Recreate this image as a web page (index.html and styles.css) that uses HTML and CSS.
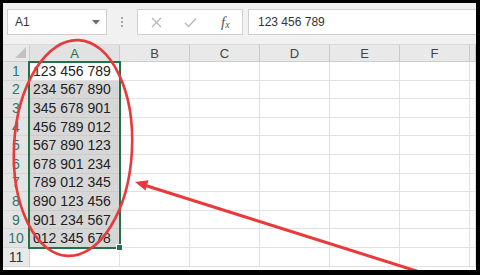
FILE: index.html
```html
<!DOCTYPE html>
<html lang="en">
<head>
    <meta charset="UTF-8">
    <title>Sheet selection</title>
    <link rel="stylesheet" href="styles.css">
</head>
<body>
    <div class="window">
        <div class="toolbar">
            <div class="name-box">
                <span>A1</span>
                <svg class="caret" width="8" height="5" viewBox="0 0 8 5"><path d="M0 0 L8 0 L4 4.5 Z" fill="#6a6a6a"/></svg>
            </div>
            <div class="grip"><i></i><i></i><i></i></div>
            <div class="fx-box">
                <svg class="ico" width="11" height="11" viewBox="0 0 11 11"><path d="M1 1 L10 10 M10 1 L1 10" stroke="#b5b5b5" stroke-width="1.2"/></svg>
                <svg class="ico" width="13" height="11" viewBox="0 0 13 11"><path d="M1 6 L4.5 9.5 L12 1.5" stroke="#b5b5b5" stroke-width="1.3" fill="none"/></svg>
                <span class="fx">f<sub>x</sub></span>
            </div>
            <div class="formula">123 456 789</div>
        </div>

        <div class="sheet">
            <div class="hd corner"><svg width="11" height="11" viewBox="0 0 11 11"><path d="M11 0 L11 11 L0 11 Z" fill="#c2c2c2"/></svg></div>
            <div class="hd col sel">A</div><div class="hd col">B</div><div class="hd col">C</div><div class="hd col">D</div><div class="hd col">E</div><div class="hd col">F</div><div class="hd col"></div>

            <div class="hd row sel">1</div><div class="c active">123 456 789</div><div class="c"></div><div class="c"></div><div class="c"></div><div class="c"></div><div class="c"></div><div class="c"></div>
            <div class="hd row sel">2</div><div class="c picked">234 567 890</div><div class="c"></div><div class="c"></div><div class="c"></div><div class="c"></div><div class="c"></div><div class="c"></div>
            <div class="hd row sel">3</div><div class="c picked">345 678 901</div><div class="c"></div><div class="c"></div><div class="c"></div><div class="c"></div><div class="c"></div><div class="c"></div>
            <div class="hd row sel">4</div><div class="c picked">456 789 012</div><div class="c"></div><div class="c"></div><div class="c"></div><div class="c"></div><div class="c"></div><div class="c"></div>
            <div class="hd row sel">5</div><div class="c picked">567 890 123</div><div class="c"></div><div class="c"></div><div class="c"></div><div class="c"></div><div class="c"></div><div class="c"></div>
            <div class="hd row sel">6</div><div class="c picked">678 901 234</div><div class="c"></div><div class="c"></div><div class="c"></div><div class="c"></div><div class="c"></div><div class="c"></div>
            <div class="hd row sel">7</div><div class="c picked">789 012 345</div><div class="c"></div><div class="c"></div><div class="c"></div><div class="c"></div><div class="c"></div><div class="c"></div>
            <div class="hd row sel">8</div><div class="c picked">890 123 456</div><div class="c"></div><div class="c"></div><div class="c"></div><div class="c"></div><div class="c"></div><div class="c"></div>
            <div class="hd row sel">9</div><div class="c picked">901 234 567</div><div class="c"></div><div class="c"></div><div class="c"></div><div class="c"></div><div class="c"></div><div class="c"></div>
            <div class="hd row sel">10</div><div class="c picked">012 345 678</div><div class="c"></div><div class="c"></div><div class="c"></div><div class="c"></div><div class="c"></div><div class="c"></div>
            <div class="hd row">11</div><div class="c"></div><div class="c"></div><div class="c"></div><div class="c"></div><div class="c"></div><div class="c"></div><div class="c"></div>

            <div class="selection"><span class="handle"></span></div>
        </div>

        <!-- hand-drawn annotation on top of the sheet -->
        <svg class="marks" width="473" height="267" viewBox="3 3 473 267">
            <ellipse cx="73" cy="148" rx="59" ry="108" transform="rotate(3 73 148)" fill="none" stroke="#e8393b" stroke-width="2.6"/>
            <line x1="426" y1="274" x2="144" y2="185" stroke="#e8393b" stroke-width="3"/>
            <path d="M135 182 L148.5 180.2 L145.5 190.6 Z" fill="#e8393b"/>
        </svg>
    </div>
</body>
</html>
```

FILE: styles.css
```css
body { margin: 0; background: #000; font-family: "Liberation Sans", Arial, sans-serif; }
.window { position: relative; margin: 3px 0 0 3px; width: 473px; height: 267px; background: #fff; overflow: hidden; }

.toolbar { display: flex; align-items: flex-start; height: 42px; padding: 6px 0 0 4px; box-sizing: border-box; background: #f1f1f1; border-bottom: 1px solid #dadada; }
.name-box { display: flex; align-items: center; justify-content: space-between; width: 100px; height: 26px; padding: 0 6px 0 7px; box-sizing: border-box; background: #fff; border: 1px solid #cfcfcf; font-size: 12px; color: #333; }
.grip { display: flex; flex-direction: column; align-items: center; justify-content: center; gap: 2px; width: 30px; height: 26px; }
.grip i { width: 2px; height: 2px; background: #a8a8a8; }
.fx-box { display: flex; align-items: center; width: 106px; height: 26px; padding-left: 13px; gap: 22px; box-sizing: border-box; background: #fff; border: 1px solid #cfcfcf; }
.fx { font-family: "Liberation Serif", serif; font-style: italic; font-size: 15px; color: #555; margin-left: 2px; }
.fx sub { font-size: 10px; vertical-align: -1px; }
.formula { flex: 1; height: 26px; margin-left: 5px; padding-left: 9px; box-sizing: border-box; background: #fff; border: 1px solid #cfcfcf; border-right: none; font-size: 12px; line-height: 24px; color: #333; }

.sheet { position: relative; display: grid; grid-template-columns: 27px 90px repeat(5, 70px) 1fr; grid-template-rows: 17px repeat(11, 18.6px); }
.hd { display: flex; align-items: center; justify-content: center; background: #e9e9e9; color: #444; font-size: 13px; box-sizing: border-box; }
.hd.col { border-right: 1px solid #c9c9c9; border-bottom: 1px solid #cdcdcd; padding-top: 1px; }
.hd.col.sel { color: #217346; background: #e2e2e2; border-bottom: 1px solid #217346; }
.hd.row { border-right: 1px solid #cdcdcd; border-bottom: 1px solid #d6d6d6; font-size: 14px; color: #333; }
.hd.row.sel { color: #2b7a6a; background: #e4e4e4; }
.corner { justify-content: flex-end; align-items: flex-end; padding: 0 3px 3px 0; border-right: 1px solid #cdcdcd; border-bottom: 1px solid #cdcdcd; }
.c { display: flex; align-items: center; padding-left: 3px; box-sizing: border-box; border-right: 1px solid #e1e1e1; border-bottom: 1px solid #e1e1e1; font-size: 14px; color: #222; white-space: nowrap; }
.c.picked { background: #d7d7d7; border-bottom-color: #cbcbcb; }
.selection { position: absolute; grid-column: 2 / 3; grid-row: 2 / 12; top: -1px; right: -1px; bottom: -1px; left: -2px; border: 2px solid #217346; pointer-events: none; }
.handle { position: absolute; right: -4px; bottom: -4px; width: 5px; height: 5px; background: #217346; border: 1px solid #fff; }

.marks { position: absolute; left: 0; top: 0; pointer-events: none; }
```
